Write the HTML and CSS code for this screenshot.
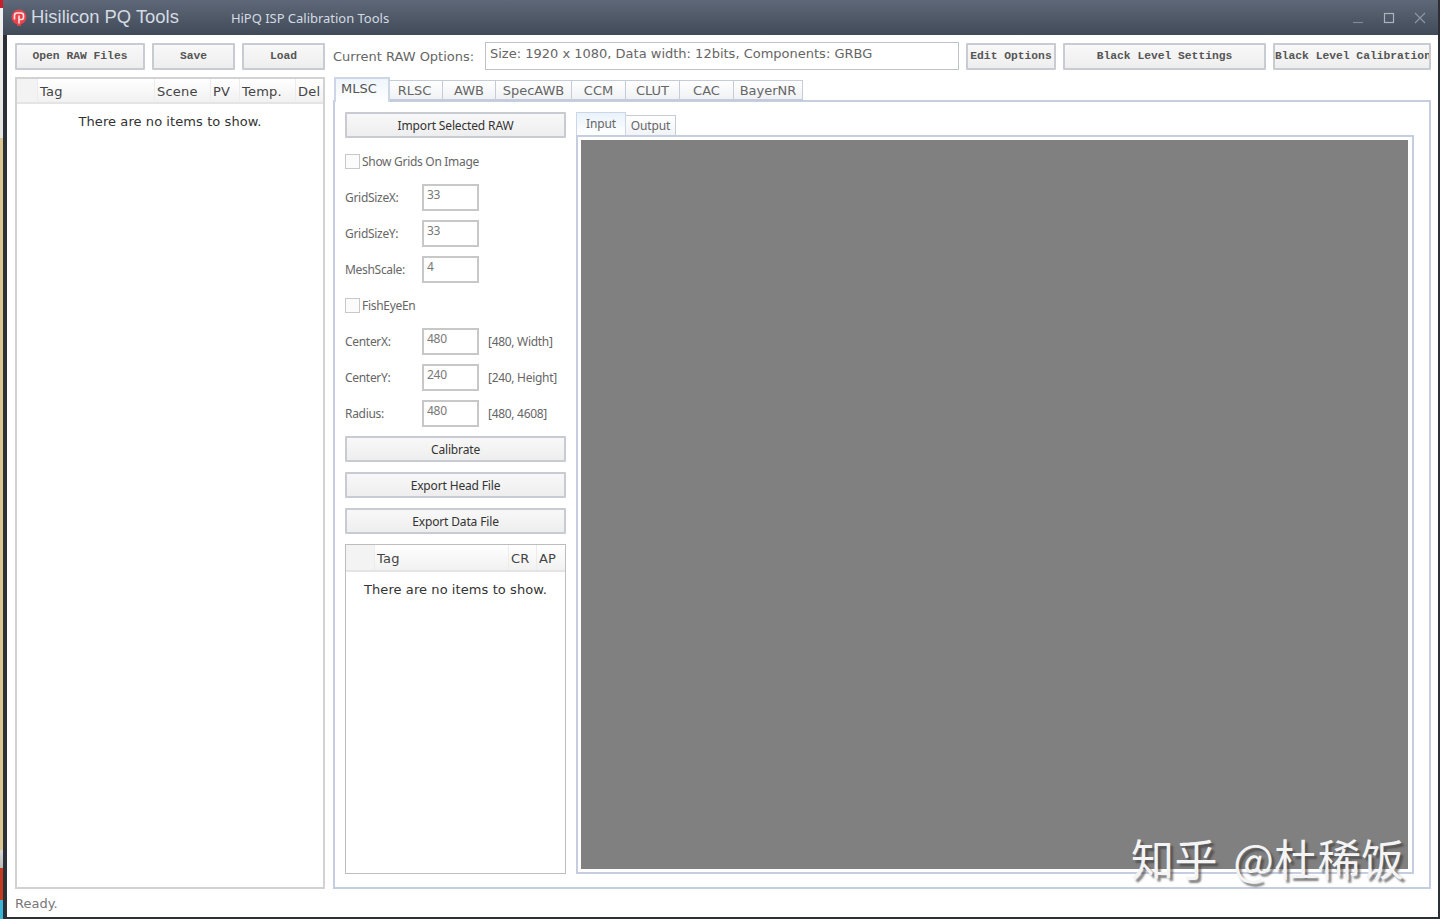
FILE: index.html
```html
<!DOCTYPE html>
<html lang="en">
<head>
  <meta charset="UTF-8" />
  <meta name="viewport" content="width=device-width, initial-scale=1.0" />
  <title>Hisilicon PQ Tools</title>
  <link rel="stylesheet" href="styles.css">
</head>
<body>
  <div class="desktop-strip"></div>
  <div class="window">
    <div class="titlebar">
      <svg class="app-icon" width="16" height="18" viewBox="0 0 16 18">
        <circle cx="8" cy="8" r="7.5" fill="#e8434c" />
        <rect x="6" y="13" width="4" height="4" rx="1" fill="#e8434c" />
        <path d="M3.5 10.5V6.5a2.5 2.5 0 0 1 2.5-2.5h4a2.5 2.5 0 0 1 2.5 2.5v2a2 2 0 0 1-2 2H8M8 6.5V14.5" fill="none" stroke="#fde4e4" stroke-width="1.6" />
      </svg>
      <span class="app-name">Hisilicon PQ Tools</span>
      <span class="app-sub">HiPQ ISP Calibration Tools</span>
      <div class="win-controls">
        <svg width="12" height="12" viewBox="0 0 12 12"><path d="M1 10.5h10" stroke="#7f8997" stroke-width="1.2" /></svg>
        <svg width="12" height="12" viewBox="0 0 12 12"><rect x="1.5" y="1.5" width="9" height="9" fill="none" stroke="#aab2bd" stroke-width="1.2" /></svg>
        <svg width="12" height="12" viewBox="0 0 12 12"><path d="M1 1l10 10M11 1L1 11" stroke="#8f98a5" stroke-width="1.1" /></svg>
      </div>
    </div>

    <div class="content">
      <div class="toolbar">
        <button class="btn mono w-open">Open RAW Files</button>
        <button class="btn mono w-save">Save</button>
        <button class="btn mono w-load">Load</button>
        <span class="raw-label">Current RAW Options:</span>
        <div class="raw-field">Size: 1920 x 1080, Data width: 12bits, Components: GRBG</div>
        <button class="btn mono w-edit">Edit Options</button>
        <button class="btn mono w-bls">Black Level Settings</button>
        <button class="btn mono w-blc">Black Level Calibration</button>
      </div>

      <div class="main">
        <div class="list main-list">
          <div class="list-head">
            <span class="col col-gutter"></span>
            <span class="col col-tag">Tag</span>
            <span class="col col-scene">Scene</span>
            <span class="col col-pv">PV</span>
            <span class="col col-temp">Temp.</span>
            <span class="col col-del">Del</span>
          </div>
          <div class="list-empty">There are no items to show.</div>
        </div>

        <div class="tabs-area">
          <div class="tabs">
            <div class="tab active">MLSC</div>
            <div class="tab t-rlsc">RLSC</div>
            <div class="tab t-awb">AWB</div>
            <div class="tab t-spec">SpecAWB</div>
            <div class="tab t-ccm">CCM</div>
            <div class="tab t-clut">CLUT</div>
            <div class="tab t-cac">CAC</div>
            <div class="tab t-bayer">BayerNR</div>
          </div>
          <div class="tab-panel">
            <div class="controls">
              <button class="btn ui">Import Selected RAW</button>
              <label class="row check-row"><span class="check"></span>Show Grids On Image</label>
              <div class="row"><span class="field-label">GridSizeX:</span><div class="input">33</div></div>
              <div class="row"><span class="field-label">GridSizeY:</span><div class="input">33</div></div>
              <div class="row"><span class="field-label">MeshScale:</span><div class="input">4</div></div>
              <label class="row check-row"><span class="check"></span>FishEyeEn</label>
              <div class="row"><span class="field-label">CenterX:</span><div class="input">480</div><span class="hint">[480, Width]</span></div>
              <div class="row"><span class="field-label">CenterY:</span><div class="input">240</div><span class="hint">[240, Height]</span></div>
              <div class="row"><span class="field-label">Radius:</span><div class="input">480</div><span class="hint">[480, 4608]</span></div>
              <button class="btn ui">Calibrate</button>
              <button class="btn ui">Export Head File</button>
              <button class="btn ui">Export Data File</button>
              <div class="list sub-list">
                <div class="list-head">
                  <span class="col sub-gutter"></span>
                  <span class="col sub-tag">Tag</span>
                  <span class="col sub-cr">CR</span>
                  <span class="col sub-ap">AP</span>
                </div>
                <div class="list-empty">There are no items to show.</div>
              </div>
            </div>

            <div class="viewer">
              <div class="inner-tabs">
                <div class="inner-tab active">Input</div>
                <div class="inner-tab">Output</div>
              </div>
              <div class="inner-panel">
                <div class="image-area"></div>
              </div>
            </div>
          </div>
        </div>
      </div>

      <div class="status">Ready.</div>
    </div>
  </div>
  <div class="watermark">知乎 @杜稀饭</div>
</body>
</html>
```

FILE: styles.css
```css
* {
  box-sizing: border-box;
}

html, body {
  height: 100%;
}

body {
  margin: 0;
  display: flex;
  overflow: hidden;
  background-color: #2b2f36;
  font-family: "Noto Sans", sans-serif;
  color: #444;
}

.desktop-strip {
  width: 3px;
  background: linear-gradient(to bottom, #c8202a 0, #c8202a 8px, #f2f2f2 8px, #e4e4e4 138px, #d9c691 138px, #d9c691 850px, #d8d8d8 850px, #b8b8b8 868px, #c43a20 868px, #c43a20 900px, #3cb4d8 900px);
}

.window {
  flex: 1;
  display: flex;
  flex-direction: column;
  margin-bottom: 2px;
  margin-right: 2px;
}

.titlebar {
  height: 35px;
  flex: none;
  display: flex;
  align-items: center;
  padding-left: 8px;
  background: linear-gradient(to bottom, #5e6878, #404a58);
  color: #dfe4ea;
}

.app-icon {
  flex: none;
  margin-top: 1px;
}

.app-name {
  margin-left: 4px;
  margin-top: -2px;
  font-family: "Liberation Sans", sans-serif;
  font-size: 18.4px;
  color: #d5dbe3;
}

.app-sub {
  margin-left: 52px;
  margin-top: 1px;
  font-family: "Noto Sans", sans-serif;
  font-size: 13px;
  letter-spacing: -0.02px;
  color: #d5dbe3;
}

.win-controls {
  margin-left: auto;
  display: flex;
  gap: 19px;
  padding-right: 12px;
}

.content {
  flex: 1;
  min-height: 0;
  margin-left: 4px;
  padding: 7px 6px 0 8px;
  display: flex;
  flex-direction: column;
  background-color: #fff;
}

.btn {
  display: block;
  height: 27px;
  padding: 0;
  border: 2px solid #c8ccd2;
  border-radius: 1px;
  background: linear-gradient(to bottom, #f8f8f8, #eeeeee);
  color: #333;
  white-space: nowrap;
  overflow: hidden;
}

.mono {
  font-family: "Liberation Mono", monospace;
  font-size: 11.3px;
  font-weight: bold;
  color: #555;
}

.ui {
  width: 221px;
  height: 26px;
  flex: none;
  font-family: "Noto Sans", sans-serif;
  font-size: 12px;
  letter-spacing: -0.15px;
  color: #333;
}

.toolbar {
  display: flex;
  align-items: center;
  height: 28px;
  flex: none;
}

.w-open { width: 130px; margin-right: 7px; }
.w-save { width: 83px; margin-right: 7px; }
.w-load { width: 83px; }
.w-edit { width: 90px; margin-left: 7px; }
.w-bls { width: 203px; margin-left: 7px; }
.w-blc { width: 158px; margin-left: 7px; }

.raw-label {
  width: 152px;
  margin-left: 8px;
  font-family: "DejaVu Sans", sans-serif;
  font-size: 13px;
  color: #666;
  white-space: nowrap;
}

.raw-field {
  width: 474px;
  height: 28px;
  padding: 1px 4px;
  border: 1px solid #bfc3c8;
  font-family: "DejaVu Sans", sans-serif;
  font-size: 13px;
  line-height: 20px;
  color: #666;
  white-space: nowrap;
}

.main {
  height: 812px;
  flex: none;
  display: flex;
  margin-top: 7px;
}

.list {
  display: flex;
  flex-direction: column;
  border: 2px solid #d2d2d2;
  background-color: #fff;
}

.main-list {
  width: 310px;
  flex: none;
}

.list-head {
  display: flex;
  height: 25px;
  flex: none;
  align-items: center;
  background: linear-gradient(to bottom, #ffffff, #f1f1f1);
  border-bottom: 2px solid #e4e4e4;
  font-family: "DejaVu Sans", sans-serif;
  font-size: 13px;
  letter-spacing: 0.2px;
  color: #444;
}

.col {
  height: 100%;
  line-height: 26px;
  white-space: nowrap;
  border-right: 1px solid #ececec;
}

.col:last-child {
  border-right: 0;
}

.col-gutter { width: 21px; background-color: #f3f3f3; }
.col-tag { width: 117px; padding-left: 2px; }
.col-scene { width: 56px; padding-left: 2px; }
.col-pv { width: 29px; padding-left: 2px; }
.col-temp { width: 56px; padding-left: 2px; }
.col-del { width: 26px; padding-left: 2px; }

.list-empty {
  margin-top: 8px;
  text-align: center;
  font-family: "DejaVu Sans", sans-serif;
  font-size: 13px;
  letter-spacing: 0.08px;
  line-height: 20px;
  color: #333;
}

.tabs-area {
  flex: none;
  width: 1098px;
  margin-left: 8px;
  display: flex;
  flex-direction: column;
}

.tabs {
  display: flex;
  align-items: flex-start;
  height: 23px;
  flex: none;
  padding-left: 1px;
  position: relative;
  z-index: 1;
}

.tab {
  height: 21px;
  margin-top: 3px;
  border: 1px solid #c5cbd8;
  border-left-width: 0;
  border-bottom-width: 2px;
  background: linear-gradient(to bottom, #ffffff, #eff1f4);
  font-family: "DejaVu Sans", sans-serif;
  font-size: 13px;
  line-height: 19px;
  text-align: center;
  color: #666;
}

.tab.active {
  width: 56px;
  height: 25px;
  margin-top: 0;
  padding-right: 6px;
  border: 2px solid #cdd6e6;
  border-bottom: 0;
  background: linear-gradient(to bottom, #eef5fc, #fff);
  color: #555;
}

.t-rlsc { width: 53px; padding-right: 3px; }
.t-awb { width: 53px; }
.t-spec { width: 76px; }
.t-ccm { width: 54px; }
.t-clut { width: 54px; }
.t-cac { width: 54px; }
.t-bayer { width: 69px; }

.tab-panel {
  flex: 1;
  min-height: 0;
  display: flex;
  padding: 10px 16px 13px 10px;
  border: 2px solid #c5cde0;
}

.controls {
  width: 221px;
  flex: none;
  display: flex;
  flex-direction: column;
  gap: 10px;
}

.row {
  display: flex;
  align-items: center;
  height: 26px;
  flex: none;
  font-family: "Noto Sans", sans-serif;
  font-size: 12px;
  letter-spacing: -0.3px;
  color: #666;
}

.check {
  width: 15px;
  height: 15px;
  margin-right: 2px;
  border: 1px solid #c8c8c8;
  background-color: #fbfbfb;
}

.field-label {
  width: 77px;
  flex: none;
}

.input {
  width: 57px;
  height: 27px;
  flex: none;
  padding: 1px 3px;
  border: 2px solid #c8c8c8;
  font-size: 12px;
  line-height: 16px;
  color: #777;
}

.hint {
  margin-left: 9px;
  white-space: nowrap;
}

.sub-list {
  width: 221px;
  flex: 1;
  min-height: 0;
  border-width: 1px;
  border-color: #bdbdbd;
}

.sub-list .list-head {
  height: 27px;
}

.sub-list .col {
  line-height: 27px;
}

.sub-gutter { width: 29px; background-color: #f3f3f3; }
.sub-tag { width: 134px; padding-left: 2px; }
.sub-cr { width: 28px; padding-left: 2px; }
.sub-ap { width: 28px; padding-left: 2px; }

.viewer {
  margin-left: 10px;
  width: 838px;
  flex: none;
  display: flex;
  flex-direction: column;
}

.inner-tabs {
  display: flex;
  align-items: flex-end;
  height: 23px;
  flex: none;
}

.inner-tab {
  width: 50px;
  height: 20px;
  border: 1px solid #c5cbd8;
  border-left-width: 0;
  border-bottom-width: 0;
  background: linear-gradient(to bottom, #fff, #f1f3f6);
  font-size: 12px;
  line-height: 20px;
  letter-spacing: -0.1px;
  text-align: center;
  color: #666;
}

.inner-tab.active {
  height: 23px;
  border: 1px solid #cdd6e6;
  border-bottom: 0;
  background: linear-gradient(to bottom, #e9f2fb, #fff);
  line-height: 21px;
}

.inner-panel {
  flex: 1;
  min-height: 0;
  display: flex;
  padding: 3px 4px 3px 3px;
  border: 2px solid #c5cde0;
}

.image-area {
  flex: 1;
  background-color: #808080;
}

.status {
  flex: 1;
  padding-top: 7px;
  font-family: "DejaVu Sans", sans-serif;
  font-size: 13px;
  color: #777;
}

.watermark {
  position: absolute;
  left: 1131px;
  top: 825px;
  font-family: "Noto Sans CJK SC", sans-serif;
  font-size: 43px;
  letter-spacing: 0.5px;
  word-spacing: 5px;
  line-height: 64px;
  white-space: nowrap;
  color: #f4f4f4;
  text-shadow: 3px 3px 2px rgba(60, 60, 60, 0.65);
}
```
